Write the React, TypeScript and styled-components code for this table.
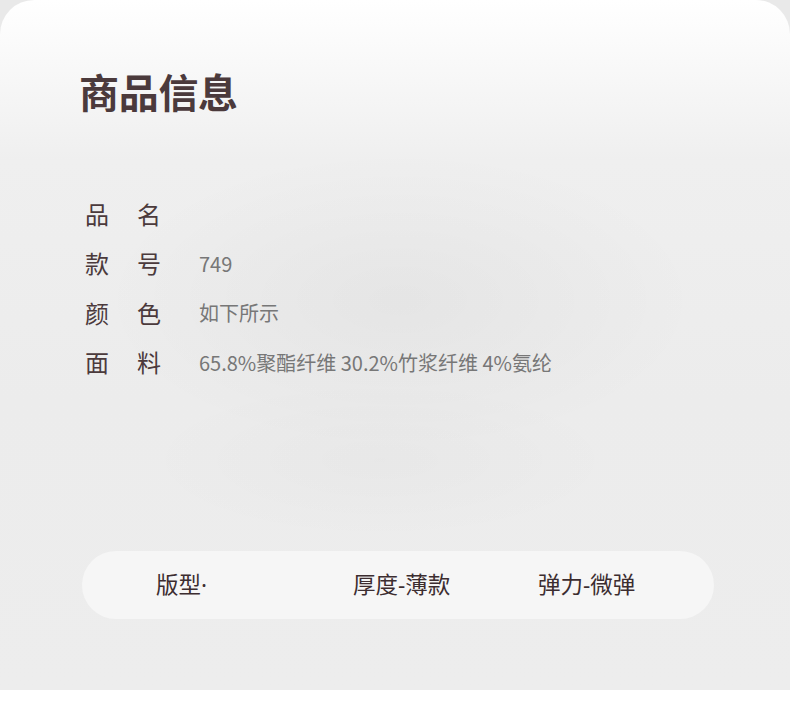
import React from "react";
import styled, { createGlobalStyle } from "styled-components";

const Global = createGlobalStyle`
  html, body {
    margin: 0;
    padding: 0;
    background: #ffffff;
  }
  body {
    font-family: "Noto Sans CJK SC", "Noto Sans", sans-serif;
  }
`;

const Page = styled.div`
  width: 790px;
  height: 705px;
  background: #ffffff;
`;

const Backdrop = styled.div`
  height: 690px;
  background: #e9e9e9;
`;

const Card = styled.section`
  box-sizing: border-box;
  height: 690px;
  border-radius: 34px 34px 0 0;
  padding: 71px 0 0 79px;
  background:
    radial-gradient(ellipse 300px 150px at 400px 300px, rgba(0, 0, 0, 0.035), rgba(0, 0, 0, 0) 100%),
    radial-gradient(ellipse 240px 80px at 380px 460px, rgba(0, 0, 0, 0.02), rgba(0, 0, 0, 0) 100%),
    linear-gradient(180deg, #ffffff 0px, #f6f6f6 90px, #efefef 160px, #ececec 400px, #ededed 690px);
  display: flex;
  flex-direction: column;
`;

const Title = styled.h1`
  margin: 0;
  font-size: 40px;
  line-height: 40px;
  font-weight: 700;
  color: #4b3a3c;
  letter-spacing: -0.3px;
`;

const Specs = styled.div`
  margin-top: 78px;
  padding-left: 6px;
  display: grid;
  grid-template-columns: 76px 1fr;
  column-gap: 37px;
  grid-auto-rows: 49.5px;
  align-items: center;
`;

const Label = styled.div`
  display: flex;
  justify-content: space-between;
  font-size: 24px;
  line-height: 30px;
  color: #4b3a3c;
`;

const Value = styled.div`
  font-size: 20px;
  line-height: 30px;
  color: #777777;
  padding-top: 1px;
  padding-left: 1px;
`;

const Pill = styled.div`
  box-sizing: border-box;
  margin-top: 164px;
  margin-left: 3px;
  width: 632px;
  height: 68px;
  border-radius: 34px;
  background: #f6f6f6;
  padding-left: 74px;
  display: grid;
  grid-template-columns: 197px 185px 1fr;
  align-items: center;
`;

const PillItem = styled.div`
  font-family: "Noto Sans", "Noto Sans CJK SC", sans-serif;
  font-size: 22.5px;
  line-height: 30px;
  color: #3c2d30;
`;

const rows: [string, string][] = [
  ["品名", ""],
  ["款号", "749"],
  ["颜色", "如下所示"],
  ["面料", "65.8%聚酯纤维 30.2%竹浆纤维 4%氨纶"],
];

export default function App() {
  return (
    <Page>
      <Global />
      <Backdrop>
        <Card>
          <Title>商品信息</Title>
          <Specs>
            {rows.map(([label, value]) => (
              <React.Fragment key={label}>
                <Label>
                  {label.split("").map((c) => (
                    <span key={c}>{c}</span>
                  ))}
                </Label>
                <Value>{value}</Value>
              </React.Fragment>
            ))}
          </Specs>
          <Pill>
            <PillItem>版型·</PillItem>
            <PillItem>厚度-薄款</PillItem>
            <PillItem>弹力-微弹</PillItem>
          </Pill>
        </Card>
      </Backdrop>
    </Page>
  );
}
